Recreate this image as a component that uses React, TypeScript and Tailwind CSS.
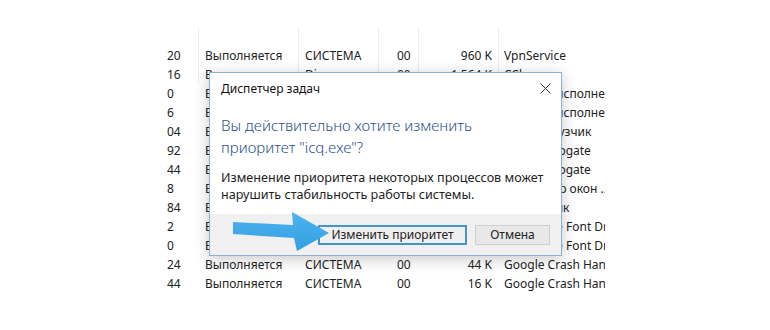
const rows = [
  { pid: "20", status: "Выполняется", user: "СИСТЕМА", cpu: "00", mem: "960 K", desc: "VpnService" },
  { pid: "16", status: "Выполняется", user: "Dima", cpu: "00", mem: "1 564 K", desc: "CCleaner" },
  { pid: "0", status: "Выполняется", user: "СИСТЕМА", cpu: "00", mem: "2 100 K", desc: "Процесс исполнения" },
  { pid: "6", status: "Выполняется", user: "СИСТЕМА", cpu: "00", mem: "1 020 K", desc: "Процесс исполнения" },
  { pid: "04", status: "Выполняется", user: "Dima", cpu: "00", mem: "3 412 K", desc: "Узел загрузчик" },
  { pid: "92", status: "Выполняется", user: "Dima", cpu: "00", mem: "1 236 K", desc: "COM Surrogate" },
  { pid: "44", status: "Выполняется", user: "Dima", cpu: "00", mem: "1 120 K", desc: "COM Surrogate" },
  { pid: "8", status: "Выполняется", user: "DWM-1", cpu: "00", mem: "24 480 K", desc: "Диспетчер окон .." },
  { pid: "84", status: "Выполняется", user: "Dima", cpu: "00", mem: "28 600 K", desc: "Проводник" },
  { pid: "2", status: "Выполняется", user: "UMFD-0", cpu: "00", mem: "84 K", desc: "Usermode Font Driver Host" },
  { pid: "0", status: "Выполняется", user: "UMFD-1", cpu: "00", mem: "96 K", desc: "Usermode Font Driver Host" },
  { pid: "24", status: "Выполняется", user: "СИСТЕМА", cpu: "00", mem: "44 K", desc: "Google Crash Handler" },
  { pid: "44", status: "Выполняется", user: "СИСТЕМА", cpu: "00", mem: "16 K", desc: "Google Crash Handler" },
];

function ProcessTable() {
  return (
    <div className="pl-[167px] pt-[28px] text-[12px] text-[#222]">
      {/* column lines at the top */}
      <div className="grid h-[18px] grid-cols-[31px_100px_80px_40px_80px_107px]">
        <div />
        <div className="border-l border-[#ececec]" />
        <div className="border-l border-[#ececec]" />
        <div className="border-l border-[#ececec]" />
        <div className="border-l border-[#ececec]" />
        <div className="border-l border-[#ececec]" />
      </div>
      {rows.map((r, i) => {
        const line = i < 2 ? "border-l border-[#ececec]" : "border-l border-transparent";
        return (
          <div
            key={i}
            className="grid h-[19px] grid-cols-[31px_100px_80px_40px_80px_107px] items-center leading-[19px]"
          >
            <div className="overflow-hidden whitespace-nowrap">{r.pid}</div>
            <div className={`overflow-hidden whitespace-nowrap pl-[6px] ${line}`}>{r.status}</div>
            <div className={`overflow-hidden whitespace-nowrap pl-[6px] ${line}`}>{r.user}</div>
            <div className={`overflow-hidden whitespace-nowrap pl-[18px] ${line}`}>{r.cpu}</div>
            <div className={`overflow-hidden whitespace-nowrap pr-[6px] text-right ${line}`}>{r.mem}</div>
            <div className={`overflow-hidden whitespace-nowrap pl-[5px] ${line}`}>{r.desc}</div>
          </div>
        );
      })}
    </div>
  );
}

function Dialog() {
  return (
    <div className="absolute left-[209px] top-[72px] flex h-[184px] w-[353px] flex-col border border-[#8eaed3] bg-white shadow-[0_3px_14px_rgba(0,0,0,0.22)]">
      <div className="flex h-[31px] items-center justify-between pl-[11px] pr-[9px] text-[12px] text-[#111]">
        <span>Диспетчер задач</span>
        <svg width="11" height="11" viewBox="0 0 11 11" className="mr-[1px]">
          <path d="M0.5 0.5 L10.5 10.5 M10.5 0.5 L0.5 10.5" stroke="#333" strokeWidth="1" fill="none" />
        </svg>
      </div>
      <div className="mt-[10px] px-[11px] text-[15px] font-light leading-[22px] text-[#2c4f8c]">
        Вы действительно хотите изменить
        <br />
        приоритет "icq.exe"?
      </div>
      <div className="mt-[11px] px-[11px] text-[12.6px] leading-[17px] text-[#222]">
        Изменение приоритета некоторых процессов может
        <br />
        нарушить стабильность работы системы.
      </div>
      <div className="mt-auto flex h-[41px] items-center justify-end gap-[8px] bg-[#f0f0f0] pr-[11px] text-[12px] text-[#222]">
        <button className="flex h-[20px] w-[149px] items-center justify-center border-2 border-[#4794c9] bg-[#efefef]">
          Изменить приоритет
        </button>
        <button className="flex h-[20px] w-[75px] items-center justify-center border border-[#cfcfcf] bg-[#e8e8e8]">
          Отмена
        </button>
      </div>
    </div>
  );
}

function Arrow() {
  return (
    <svg className="absolute left-[230px] top-[208px]" width="104" height="46" viewBox="0 0 104 46">
      <defs>
        <linearGradient id="arr" x1="0" y1="0" x2="0" y2="1">
          <stop offset="0" stopColor="#4fb3ee" />
          <stop offset="1" stopColor="#319fe2" />
        </linearGradient>
      </defs>
      <polygon points="3,14 63,17 62,4 99,25 67,43 64,30 3,26" fill="url(#arr)" />
    </svg>
  );
}

export default function App() {
  return (
    <div
      className="relative h-[330px] w-[770px] overflow-hidden bg-white"
      style={{ fontFamily: '"Noto Sans", "Open Sans", sans-serif' }}
    >
      <ProcessTable />
      <Dialog />
      <Arrow />
    </div>
  );
}
